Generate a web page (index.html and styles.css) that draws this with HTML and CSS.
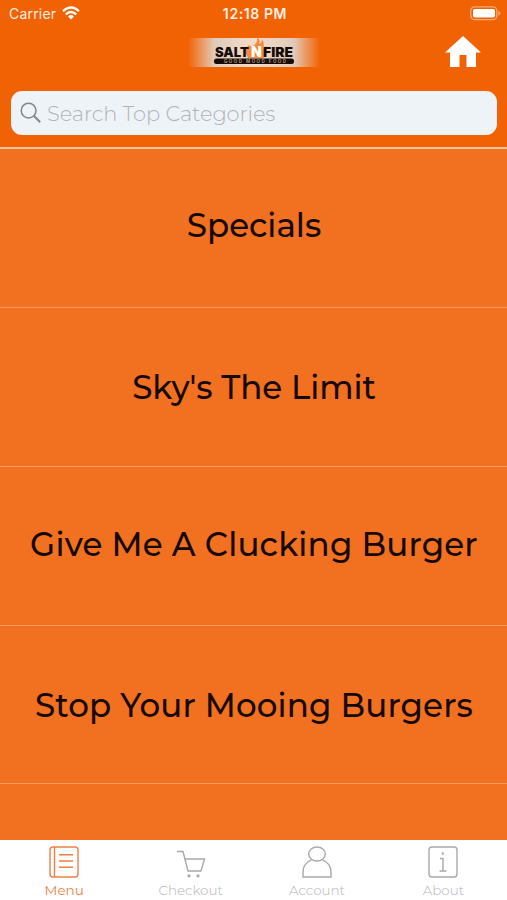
FILE: index.html
```
<!DOCTYPE html>
<html lang="en">
<head>
    <meta charset="UTF-8">
    <meta name="viewport" content="width=device-width, initial-scale=1.0">
    <title>Salt N Fire</title>
    <link rel="stylesheet" href="styles.css">
</head>
<body>
    <header class="header">
        <div class="status">
            <div class="carrier">
                <span>Carrier</span>
                <svg class="wifi" viewBox="0 0 18 14" width="18" height="14">
                    <path d="M1 5.2Q9-2.2 17 5.2M3.8 8.4Q9 3.6 14.2 8.4" fill="none" stroke="#fff" stroke-width="2.2"/>
                    <path d="M6 10.4Q9 7.8 12 10.4L9 13.6z" fill="#fff"/>
                </svg>
            </div>
            <div class="clock">12:18 PM</div>
            <svg class="battery" viewBox="0 0 31 15" width="31" height="15">
                <rect x=".8" y=".8" width="26" height="12.8" rx="4" fill="none" stroke="#fba878" stroke-width="1.3"/>
                <rect x="3" y="3" width="22" height="8.6" rx="2" fill="#fff"/>
                <path d="M28.4 4.8v5q2-1 2-2.5t-2-2.5z" fill="#fba878"/>
            </svg>
        </div>
        <div class="brand">
            <svg class="logo" viewBox="0 0 134 32" width="134" height="32">
                <defs>
                    <linearGradient id="glow">
                        <stop offset="0" stop-color="#e8c8b0" stop-opacity="0"/>
                        <stop offset=".2" stop-color="#e0cbbb"/>
                        <stop offset=".5" stop-color="#f3dcc8"/>
                        <stop offset=".8" stop-color="#e0cbbb"/>
                        <stop offset="1" stop-color="#e8c8b0" stop-opacity="0"/>
                    </linearGradient>
                </defs>
                <rect x="1" y="2" width="132" height="29" fill="url(#glow)"/>
                <path d="M61 22q-5-8 1-13 1 2 4 1 5-3 4-9 4 3 2 7 3-1 3-5 3 5 1 10 2 0 3-3 2 8-3 12z" fill="#f58a38"/>
                <text class="logo-name" x="28" y="21" textLength="34" lengthAdjust="spacingAndGlyphs">SALT</text>
                <text class="logo-n" x="64" y="21">N</text>
                <text class="logo-name" x="76" y="21" textLength="30" lengthAdjust="spacingAndGlyphs">FIRE</text>
                <rect x="27" y="22.5" width="80" height="5.5" rx="2.5" fill="#160b06"/>
                <text class="logo-tag" x="37" y="26.8" textLength="62">GOOD MOOD FOOD</text>
            </svg>
            <svg class="home" viewBox="0 0 36 32" width="36" height="32">
                <path d="M18 0l18 16.5h-5V31H21.5V19h-7v12H5V16.5H0z" fill="#fff"/>
            </svg>
        </div>
        <div class="search">
            <svg viewBox="0 0 22 22" width="22" height="22" fill="none" stroke="#85888a">
                <circle cx="8.6" cy="8.6" r="7.4" stroke-width="1.5"/>
                <path d="M13.8 13.8l6.4 6.4" stroke-width="2"/>
            </svg>
            <span class="placeholder">Search Top Categories</span>
        </div>
    </header>

    <main class="categories">
        <div class="category specials"><span>Specials</span></div>
        <div class="category sky"><span>Sky's The Limit</span></div>
        <div class="category clucking"><span>Give Me A Clucking Burger</span></div>
        <div class="category mooing"><span>Stop Your Mooing Burgers</span></div>
    </main>

    <nav class="tabs">
        <div class="tab active">
            <svg viewBox="0 0 30 32" width="30" height="32">
                <rect x="1" y="1" width="28" height="30" rx="3"/>
                <path d="M5.5 1v30M10 8.8h14M10 15h14M10 21.2h14"/>
            </svg>
            <span>Menu</span>
        </div>
        <div class="tab checkout">
            <svg viewBox="0 0 30 32" width="30" height="32">
                <path d="M1 5.5H7l5 19.5h13L28.5 13H9"/>
                <circle cx="13" cy="29.8" r="1.6" class="dot"/>
                <circle cx="22" cy="29.8" r="1.6" class="dot"/>
            </svg>
            <span>Checkout</span>
        </div>
        <div class="tab account">
            <svg viewBox="0 0 30 32" width="30" height="32">
                <ellipse cx="15" cy="8" rx="8.3" ry="7"/>
                <path d="M9.5 13.8C4 16 1 20.5 1 26v5h28v-5c0-5.5-3-10-8.5-12.2"/>
            </svg>
            <span>Account</span>
        </div>
        <div class="tab about">
            <svg viewBox="0 0 30 32" width="30" height="32">
                <rect x="1" y="1" width="28" height="30" rx="3"/>
                <path d="M12 12.5h3V25M11.5 25h7"/>
                <circle cx="14.8" cy="7.5" r="1.2" class="dot"/>
            </svg>
            <span>About</span>
        </div>
    </nav>
</body>
</html>
```
FILE: styles.css
```
* { box-sizing: border-box; margin: 0; padding: 0; }
body {
    width: 507px; height: 900px; overflow: hidden; display: flex; flex-direction: column;
    background-color: #f27120; font-family: Montserrat, Inter, sans-serif;
}
svg { display: block; }
.header { height: 149px; background-color: #f16204; border-bottom: 2px solid #fbc39d; }
.status {
    height: 28px; padding: 0 6px 0 9px; display: grid; grid-template-columns: 1fr auto 1fr; align-items: center;
    color: #ffeee2; font-family: Inter, sans-serif; font-size: 14px;
}
.carrier { display: flex; align-items: center; gap: 6px; letter-spacing: 0.2px; margin-top: -1px; }
.wifi { margin-top: -1px; }
.clock { font-weight: 600; font-size: 14px; letter-spacing: 0.6px; margin-top: -1px; }
.battery { justify-self: end; margin-top: -1px; }
.brand { height: 63px; padding: 8px 26px 0 187px; display: flex; justify-content: space-between; align-items: flex-start; }
.logo-name { font-family: Inter, sans-serif; font-weight: 900; font-size: 13px; fill: #160b06; }
.logo-n { font-family: Inter, sans-serif; font-weight: 900; font-size: 14px; fill: #fff; }
.logo-tag { font-family: Inter, sans-serif; font-weight: 700; font-size: 4.5px; fill: #b08e78; }
.search {
    height: 44px; margin: 0 10px 0 11px; padding: 0 9px; border-radius: 11px; background-color: #eef3f7;
    display: flex; align-items: center; gap: 5px;
}
.placeholder { color: #b0b4b7; font-size: 21px; font-weight: 300; letter-spacing: -0.1px; }
.categories { flex: 1; }
.category {
    height: 159px; padding-left: 1px; border-bottom: 1px solid #f79a62; display: flex; align-items: center;
    justify-content: center; color: #160903; font-size: 32.5px; font-weight: 500; white-space: nowrap;
}
.specials { padding-bottom: 6px; }
.sky { letter-spacing: -0.05px; }
.clucking { padding-bottom: 3px; letter-spacing: 0.2px; }
.mooing { height: 158px; padding-top: 2px; letter-spacing: 0.15px; }
.tabs { height: 60px; padding-left: 1px; background-color: #fff; display: grid; grid-template-columns: repeat(4, 126.4px); }
.tab {
    padding-top: 6px; display: flex; flex-direction: column; align-items: center; gap: 4px;
    color: #b5b5b5; font-size: 13.5px; font-weight: 300; line-height: 17px;
}
.tab svg { fill: none; stroke: #a9a9a9; stroke-width: 1.4; }
.tab .dot { fill: #a9a9a9; stroke: none; }
.active { color: #f08042; font-weight: 400; }
.active svg { stroke: #f08042; }
```
